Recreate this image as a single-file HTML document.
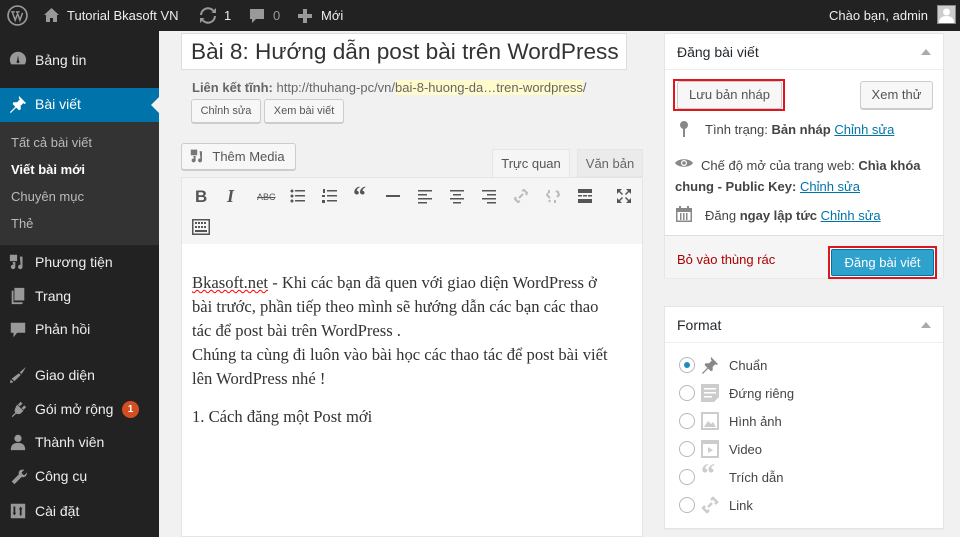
<!DOCTYPE html>
<html><head><meta charset="utf-8"><style>
*{box-sizing:border-box;margin:0;padding:0}
body{width:960px;height:537px;overflow:hidden;background:#f1f1f1;font-family:"Liberation Sans",sans-serif;font-size:13px;color:#444;position:relative}
.ab{position:absolute;left:0;top:0;width:960px;height:31px;background:#222;color:#eee;font-size:13px}
.ab span{position:absolute;top:8px}
.sb{position:absolute;left:0;top:31px;width:159px;height:506px;background:#222}
.mi{position:absolute;left:35px;color:#eee;font-size:14px}
.ic{position:absolute;left:9px;width:18px;height:18px;fill:#999}
.sub{position:absolute;left:0;top:91px;width:159px;height:123px;background:#333}
.si{position:absolute;left:11px;color:#bbb;font-size:13px}
.btn{position:absolute;background:#f7f7f7;border:1px solid #ccc;border-radius:3px;color:#555;font-size:12px;text-align:center;box-shadow:0 1px 0 #ccc}
.box{position:absolute;background:#fff;border:1px solid #e5e5e5;box-shadow:0 1px 1px rgba(0,0,0,.04)}
.hd{position:absolute;left:0;right:0;top:0;border-bottom:1px solid #eee;font-size:14px;color:#23282d;padding-left:12px}
.tri{position:absolute;right:12px;width:0;height:0;border-left:5px solid transparent;border-right:5px solid transparent;border-bottom:6px solid #aaa}
a{color:#0073aa;text-decoration:underline}
.tb{position:absolute;top:188px;fill:#555}
.rad{position:absolute;left:14px;width:16px;height:16px;border:1px solid #b4b9be;border-radius:50%;background:#fff}
.fl{position:absolute;left:64px;font-size:13px;color:#444}
.fi{position:absolute;left:36px;width:18px;height:18px;fill:#ccc}
</style></head><body>
<div class="ab">
<svg style="position:absolute;left:7px;top:5px" width="21" height="21" viewBox="0 0 20 20"><circle cx="10" cy="10" r="9" fill="none" stroke="#999" stroke-width="1.6"/><path d="M4 6.5h3.5M5 6.5l2.8 8 2-5.5M8.5 6.5h3.5M9.5 6.5l2.8 8 2.5-7" fill="none" stroke="#999" stroke-width="1.4"/></svg>
<svg style="position:absolute;left:43px;top:7px" width="17" height="16" viewBox="0 0 17 16"><path d="M8.5 1L1 8h2v7h4v-4h3v4h4V8h2z" fill="#999"/></svg>
<span style="left:67px">Tutorial Bkasoft VN</span>
<svg style="position:absolute;left:199px;top:7px" width="18" height="17" viewBox="0 0 18 17"><path d="M3 8a6 6 0 0 1 11-3l-2 1h5V1l-2 2A8 8 0 0 0 1 8zM15 9a6 6 0 0 1-11 3l2-1H1v5l2-2a8 8 0 0 0 14-5z" fill="#999"/></svg>
<span style="left:224px">1</span>
<svg style="position:absolute;left:249px;top:8px" width="16" height="16" viewBox="0 0 16 16"><path d="M1 1h14v10H7l-4 4v-4H1z" fill="#999"/></svg>
<span style="left:273px;color:#999">0</span>
<svg style="position:absolute;left:298px;top:9px" width="14" height="14"><path d="M5 0h4v5h5v4H9v5H5V9H0V5h5z" fill="#999"/></svg>
<span style="left:321px">Mới</span>
<span style="left:829px">Chào bạn, admin</span>
<div style="position:absolute;left:937px;top:5px;width:19px;height:19px;background:#ccc;border:1px solid #888"><svg width="17" height="17"><circle cx="8.5" cy="6" r="3.5" fill="#fff"/><path d="M1 17c0-5 3-7 7.5-7s7.5 2 7.5 7z" fill="#fff"/></svg></div>
</div>
<div class="sb">
<svg class="ic" style="top:19px" viewBox="0 0 20 20"><path d="M10 2a9 9 0 0 0-9 9c0 2 .6 3.5 1.5 5h15c1-1.5 1.5-3 1.5-5a9 9 0 0 0-9-9zm0 4l1 6a1.5 1.5 0 1 1-2 0z"/></svg>
<div class="mi" style="top:21px">Bảng tin</div>
<div style="position:absolute;left:0;top:57px;width:159px;height:34px;background:#0073aa"></div>
<svg class="ic" style="top:64px;fill:#fff" viewBox="0 0 20 20"><path d="M11 1l8 8-2 1-1-1-3 3v4l-2 1-3-3-6 6-1-1 6-6-3-3 1-2h4l3-3-1-1z"/></svg>
<div class="mi" style="top:65px;color:#fff">Bài viết</div>
<div style="position:absolute;left:151px;top:66px;border-top:8px solid transparent;border-bottom:8px solid transparent;border-right:8px solid #f1f1f1"></div>
<div class="sub"></div>
<div class="si" style="top:104px">Tất cả bài viết</div>
<div class="si" style="top:131px;color:#fff;font-weight:bold">Viết bài mới</div>
<div class="si" style="top:158px">Chuyên mục</div>
<div class="si" style="top:185px">Thẻ</div>
<svg class="ic" style="top:222px" viewBox="0 0 20 20"><path d="M1 2h8v7H1zM12 4h3v11a2.5 2.5 0 1 1-2-2zM4 10h3v5a2.5 2.5 0 1 1-2-2z"/></svg>
<div class="mi" style="top:223px">Phương tiện</div>
<svg class="ic" style="top:256px" viewBox="0 0 20 20"><path d="M6 1h11v14H6zM3 4h2v13h10v2H3z"/></svg>
<div class="mi" style="top:257px">Trang</div>
<svg class="ic" style="top:290px" viewBox="0 0 20 20"><path d="M2 2h16v11H9l-4 5v-5H2z"/></svg>
<div class="mi" style="top:290px">Phản hồi</div>
<svg class="ic" style="top:335px" viewBox="0 0 20 20"><path d="M19 1l-7 6 2 2zM11 8l-8 6 3 3 7-7zM2 15l-1 4 4-1z"/></svg>
<div class="mi" style="top:336px">Giao diện</div>
<svg class="ic" style="top:369px" viewBox="0 0 20 20"><path d="M13 2l-3 3 2 2 3-3zM17 6l-3 3 2 2 3-3zM9 5l7 7-3 3c-2 1-4 1-5 0l-4 4-1-1 4-4c-1-1-1-3 0-5z"/></svg>
<div class="mi" style="top:370px">Gói mở rộng</div>
<div style="position:absolute;left:122px;top:370px;width:17px;height:17px;border-radius:50%;background:#d54e21;color:#fff;font-size:10px;font-weight:bold;text-align:center;line-height:17px">1</div>
<svg class="ic" style="top:402px" viewBox="0 0 20 20"><circle cx="10" cy="6" r="4"/><path d="M2 19c0-6 3-8 8-8s8 2 8 8z"/></svg>
<div class="mi" style="top:403px">Thành viên</div>
<svg class="ic" style="top:437px" viewBox="0 0 20 20"><path d="M17 2l-3 3 1 2 2 1 3-3c0 4-3 6-6 5l-8 8-3-3 8-8c-1-3 1-6 6-5z"/></svg>
<div class="mi" style="top:437px">Công cụ</div>
<svg class="ic" style="top:471px" viewBox="0 0 20 20"><path d="M2 2h16v16H2zM5 5v7H4l2 3 2-3H7V5zm7 10h2V8h1l-2-3-2 3h1z" fill-rule="evenodd"/></svg>
<div class="mi" style="top:472px">Cài đặt</div>
</div>

<div style="position:absolute;left:181px;top:33px;width:446px;height:37px;background:#fff;border:1px solid #ddd;font-size:22.6px;color:#333;padding:5px 0 0 9px;white-space:nowrap">Bài 8: Hướng dẫn post bài trên WordPress</div>
<div style="position:absolute;left:192px;top:80px;font-size:13px;color:#666"><b>Liên kết tĩnh:</b> http://thuhang-pc/vn/<span style="background:#fffbcc">bai-8-huong-da…tren-wordpress</span>/</div>
<div class="btn" style="left:191px;top:99px;width:70px;height:24px;line-height:22px;font-size:11px">Chỉnh sửa</div>
<div class="btn" style="left:264px;top:99px;width:80px;height:24px;line-height:22px;font-size:11px">Xem bài viết</div>
<div class="btn" style="left:181px;top:143px;width:115px;height:27px;line-height:26px;font-size:13px;padding-left:20px">Thêm Media</div>
<svg style="position:absolute;left:190px;top:148px" width="16" height="16" viewBox="0 0 20 20"><path d="M1 2h8v7H1zM12 4h3v11a2.5 2.5 0 1 1-2-2zM4 10h3v5a2.5 2.5 0 1 1-2-2z" fill="#777"/></svg>
<div style="position:absolute;left:492px;top:149px;width:78px;height:29px;background:#f5f5f5;border:1px solid #e5e5e5;border-bottom:none;font-size:13px;color:#555;text-align:center;line-height:27px">Trực quan</div>
<div style="position:absolute;left:577px;top:149px;width:66px;height:28px;background:#ebebeb;border:1px solid #e5e5e5;font-size:13px;color:#666;text-align:center;line-height:27px">Văn bản</div>
<div style="position:absolute;left:181px;top:177px;width:462px;height:68px;background:#f5f5f5;border:1px solid #e5e5e5"></div>
<div style="position:absolute;left:195px;top:187px;font:bold 17px 'Liberation Sans';color:#555">B</div>
<div style="position:absolute;left:227px;top:186px;font:italic bold 18px 'Liberation Serif';color:#555">I</div>
<div style="position:absolute;left:257px;top:192px;font:9px 'Liberation Sans';color:#555;text-decoration:line-through">ABC</div>
<svg class="tb" style="left:290px" width="16" height="16"><circle cx="2" cy="3" r="1.5"/><circle cx="2" cy="8" r="1.5"/><circle cx="2" cy="13" r="1.5"/><path d="M5 2h10v1.5H5zM5 7h10v1.5H5zM5 12h10v1.5H5z"/></svg>
<svg class="tb" style="left:322px" width="16" height="16"><path d="M1 1h2v4H1zM5 2h10v1.5H5zM5 7h10v1.5H5zM5 12h10v1.5H5zM0 7h3v2H0zM0 12h3v3H0z"/></svg>
<div style="position:absolute;left:353px;top:181px;font:bold 26px 'Liberation Serif';color:#555">“</div>
<svg class="tb" style="left:385px" width="16" height="16"><path d="M1 7h14v2H1z"/></svg>
<svg class="tb" style="left:417px" width="16" height="16"><path d="M1 2h14v1.5H1zM1 6h9v1.5H1zM1 10h14v1.5H1zM1 14h9v1.5H1z"/></svg>
<svg class="tb" style="left:449px" width="16" height="16"><path d="M1 2h14v1.5H1zM4 6h8v1.5H4zM1 10h14v1.5H1zM4 14h8v1.5H4z"/></svg>
<svg class="tb" style="left:481px" width="16" height="16"><path d="M1 2h14v1.5H1zM6 6h9v1.5H6zM1 10h14v1.5H1zM6 14h9v1.5H6z"/></svg>
<svg class="tb" style="left:513px;fill:none;stroke:#bbb;stroke-width:2" width="16" height="16"><path d="M6 10l4-4M3 9l-1 2 3 3 2-1M9 3l2-1 3 3-1 2"/></svg>
<svg class="tb" style="left:545px;fill:none;stroke:#bbb;stroke-width:2" width="16" height="16"><path d="M3 5l-1 2 3 3M11 3l2 1 1 3-2 2M5 12l-1 2M12 5l2-1M10 12v3M4 2v3"/></svg>
<svg class="tb" style="left:577px" width="16" height="16"><path d="M1 1h14v4H1zM1 7h4v1.5H1zM6 7h4v1.5H6zM11 7h4v1.5h-4zM1 11h14v4H1z"/></svg>
<svg class="tb" style="left:616px" width="16" height="16"><path d="M1 1h5L4 3l3 3-1 1-3-3-2 2zM15 1v5l-2-2-3 3-1-1 3-3-2-2zM1 15v-5l2 2 3-3 1 1-3 3 2 2zM15 15h-5l2-2-3-3 1-1 3 3 2-2z"/></svg>
<svg class="tb" style="left:192px;top:219px" width="18" height="16"><path d="M0 0h18v16H0zM1.5 1.5v13h15v-13zM3 3h2v2H3zm3 0h2v2H6zm3 0h2v2H9zm3 0h2v2h-2zM3 7h2v2H3zm3 0h2v2H6zm3 0h2v2H9zm3 0h2v2h-2zM3 11h12v2H3z" fill-rule="evenodd"/></svg>
<div style="position:absolute;left:181px;top:244px;width:462px;height:293px;background:#fff;border:1px solid #e5e5e5;border-top:none"></div>
<div style="position:absolute;left:192px;top:271px;width:428px;font:16.6px/24px 'Liberation Serif',serif;color:#333"><span style="text-decoration:underline wavy red;text-decoration-thickness:1px">Bkasoft.net</span> - Khi các bạn đã quen với giao diện WordPress ở bài trước, phần tiếp theo mình sẽ hướng dẫn các bạn các thao tác để post bài trên WordPress .<br>Chúng ta cùng đi luôn vào bài học các thao tác để post bài viết lên WordPress nhé !<div style="margin-top:14px">1. Cách đăng một Post mới</div></div>

<div class="box" style="left:664px;top:33px;width:280px;height:245px">
<div class="hd" style="height:36px;line-height:36px">Đăng bài viết</div><div class="tri" style="top:15px"></div>
<div class="btn" style="left:12px;top:47px;width:105px;height:28px;line-height:26px;font-size:13px">Lưu bản nháp</div>
<div style="position:absolute;left:8px;top:45px;width:112px;height:32px;border:2px solid #e0161e"></div>
<div class="btn" style="left:195px;top:47px;width:73px;height:28px;line-height:26px;font-size:13px">Xem thử</div>
<svg style="position:absolute;left:14px;top:87px" width="10" height="17"><circle cx="5" cy="4" r="4" fill="#888"/><path d="M4 6h2v10H4z" fill="#888"/></svg>
<div style="position:absolute;left:40px;top:88px;font-size:13px">Tình trạng: <b>Bản nháp</b> <a>Chỉnh sửa</a></div>
<svg style="position:absolute;left:10px;top:123px" width="18" height="12"><path d="M0 6c3-5 15-5 18 0-3 5-15 5-18 0z" fill="#888"/><circle cx="9" cy="6" r="3" fill="#fff"/><circle cx="9" cy="6" r="1.8" fill="#888"/></svg>
<div style="position:absolute;left:10px;top:121px;width:262px;font-size:13px;line-height:21px;text-indent:26px">Chế độ mở của trang web: <b>Chìa khóa chung - Public Key:</b> <a>Chỉnh sửa</a></div>
<svg style="position:absolute;left:11px;top:172px" width="16" height="16"><path d="M0 2h16v14H0zM1.5 6v8.5h13V6z" fill="#888" fill-rule="evenodd"/><path d="M3 0h2v4H3zM11 0h2v4h-2zM4 7h1.5v7H4zM7 7h1.5v7H7zM10 7h1.5v7H10z" fill="#888"/></svg>
<div style="position:absolute;left:40px;top:174px;font-size:13px">Đăng <b>ngay lập tức</b> <a>Chỉnh sửa</a></div>
<div style="position:absolute;left:0;top:201px;width:278px;height:43px;background:#f5f5f5;border-top:1px solid #ddd"></div>
<div style="position:absolute;left:12px;top:218px;font-size:13px;color:#a00">Bỏ vào thùng rác</div>
<div style="position:absolute;left:163px;top:212px;width:109px;height:33px;border:2px solid #e0161e;background:#fff"></div>
<div style="position:absolute;left:166px;top:215px;width:103px;height:27px;background:#2ea2cc;border:1px solid #0074a2;border-radius:2px;color:#fff;font-size:13px;text-align:center;line-height:25px">Đăng bài viết</div>
</div>

<div class="box" style="left:664px;top:306px;width:280px;height:223px">
<div class="hd" style="height:36px;line-height:36px">Format</div><div class="tri" style="top:15px"></div>
<div class="rad" style="top:50px"><div style="position:absolute;left:4px;top:4px;width:6px;height:6px;border-radius:50%;background:#1e8cbe"></div></div>
<svg class="fi" style="top:49px;fill:#888" viewBox="0 0 20 20"><path d="M11 1l8 8-2 1-1-1-3 3v4l-2 1-3-3-6 6-1-1 6-6-3-3 1-2h4l3-3-1-1z"/></svg>
<div class="fl" style="top:51px">Chuẩn</div>
<div class="rad" style="top:78px"></div><svg class="fi" style="top:77px" viewBox="0 0 18 18"><path d="M0 0h18v13l-5 5H0zM3 4h12v1.5H3zM3 8h12v1.5H3zM3 12h8v1.5H3z" fill-rule="evenodd"/></svg><div class="fl" style="top:79px">Đứng riêng</div>
<div class="rad" style="top:106px"></div><svg class="fi" style="top:105px" viewBox="0 0 18 18"><path d="M0 0h18v18H0zM2 2v14h14V2zM3 15l4-6 3 3 2-2 3 5z" fill-rule="evenodd"/></svg><div class="fl" style="top:107px">Hình ảnh</div>
<div class="rad" style="top:134px"></div><svg class="fi" style="top:133px" viewBox="0 0 18 18"><path d="M0 0h18v18H0zM2 4v12h14V4zM7 7l5 3-5 3z" fill-rule="evenodd"/></svg><div class="fl" style="top:135px">Video</div>
<div class="rad" style="top:162px"></div><div style="position:absolute;left:36px;top:152px;font:bold 28px 'Liberation Serif';color:#ccc">“</div><div class="fl" style="top:163px">Trích dẫn</div>
<div class="rad" style="top:190px"></div><svg class="fi" style="top:189px;fill:none;stroke:#ccc;stroke-width:2.5" viewBox="0 0 18 18"><path d="M7 11l4-4M4 10l-2 2 4 4 2-2M10 4l2-2 4 4-2 2"/></svg><div class="fl" style="top:191px">Link</div>
</div>
</body></html>
